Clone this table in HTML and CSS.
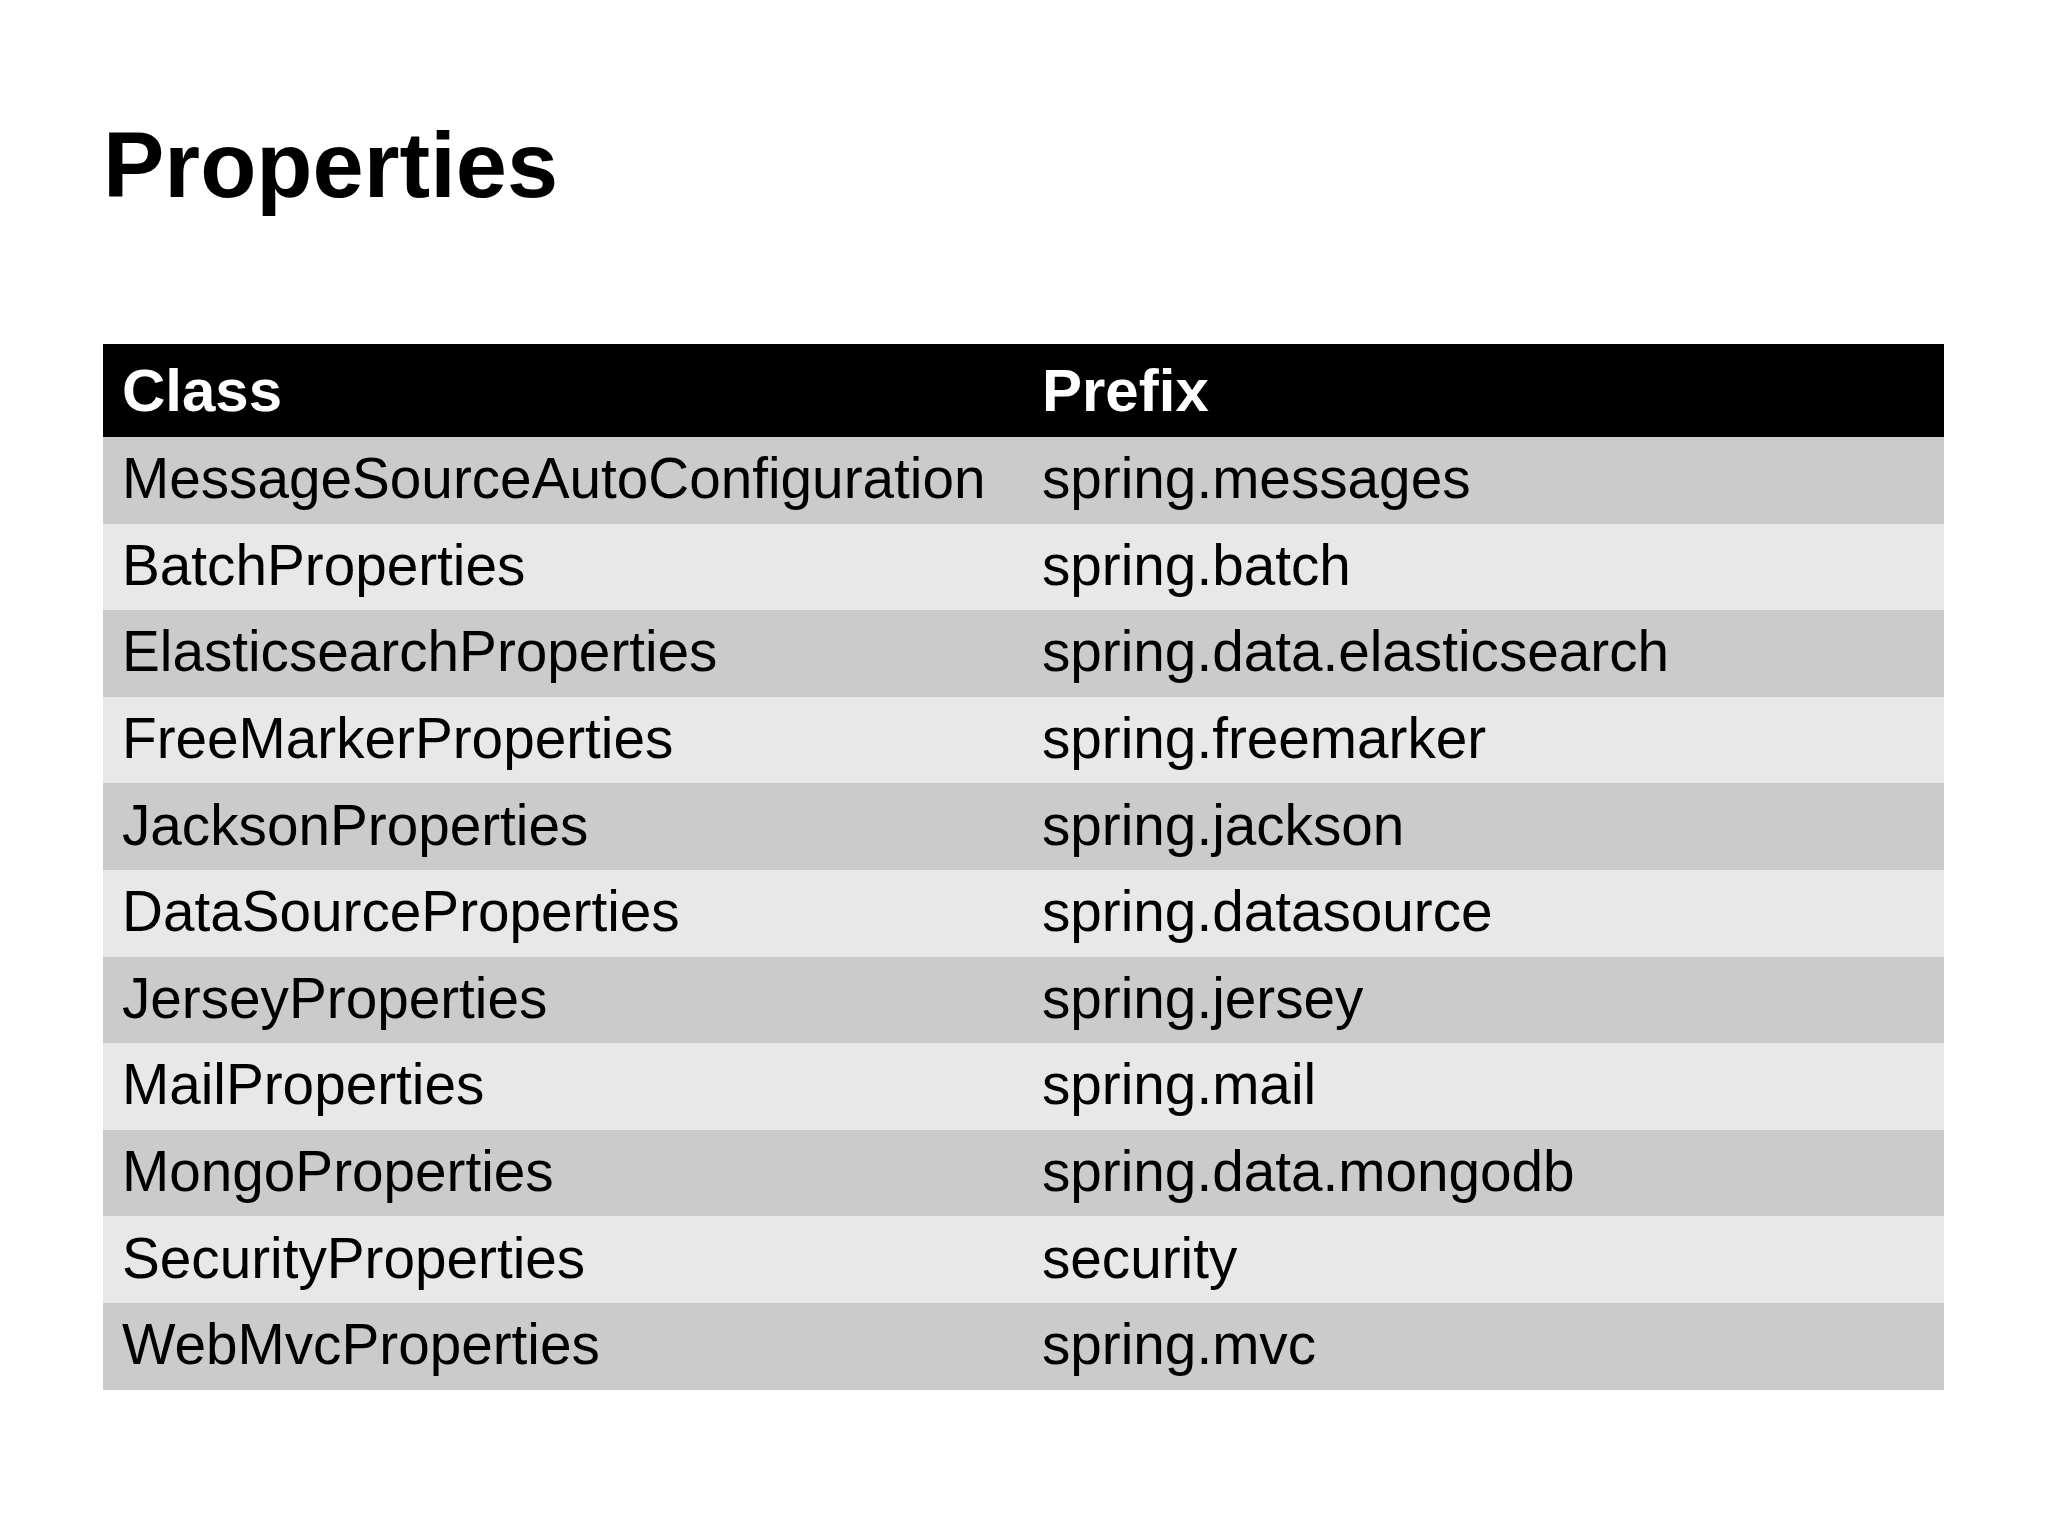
FILE: index.html
```html
<!DOCTYPE html>
<html lang="en">
<head>
<meta charset="utf-8">
<title>Properties</title>
<link rel="stylesheet" href="styles.css">
</head>
<body>
<main class="slide">
  <h1 class="title">Properties</h1>
  <table class="props">
    <thead>
      <tr><th class="col-class">Class</th><th>Prefix</th></tr>
    </thead>
    <tbody>
      <tr><td>MessageSourceAutoConfiguration</td><td>spring.messages</td></tr>
      <tr><td>BatchProperties</td><td>spring.batch</td></tr>
      <tr><td>ElasticsearchProperties</td><td>spring.data.elasticsearch</td></tr>
      <tr><td>FreeMarkerProperties</td><td>spring.freemarker</td></tr>
      <tr><td>JacksonProperties</td><td>spring.jackson</td></tr>
      <tr><td>DataSourceProperties</td><td>spring.datasource</td></tr>
      <tr><td>JerseyProperties</td><td>spring.jersey</td></tr>
      <tr><td>MailProperties</td><td>spring.mail</td></tr>
      <tr><td>MongoProperties</td><td>spring.data.mongodb</td></tr>
      <tr><td>SecurityProperties</td><td>security</td></tr>
      <tr><td>WebMvcProperties</td><td>spring.mvc</td></tr>
    </tbody>
  </table>
</main>
</body>
</html>
```

FILE: styles.css
```css
html, body {
  margin: 0;
  padding: 0;
  background: #ffffff;
}

body {
  font-family: "Liberation Sans", Arial, sans-serif;
  color: #000000;
}

.slide {
  width: 2048px;
  height: 1535px;
  padding: 119px 0 0 103px;
  box-sizing: border-box;
}

.title {
  margin: 0 0 133px 0;
  font-size: 92px;
  font-weight: bold;
  line-height: 1;
  letter-spacing: 0;
}

.props {
  width: 1841px;
  border-collapse: collapse;
  table-layout: fixed;
}

.props th,
.props td {
  padding: 0 0 0 19px;
  text-align: left;
  vertical-align: middle;
  white-space: nowrap;
}

.col-class {
  width: 901px;
}

.props thead tr {
  background: #000000;
  height: 93px;
}

.props th {
  color: #ffffff;
  font-size: 60px;
  font-weight: bold;
  padding-top: 0;
}

.props tbody tr {
  height: 86.6px;
}

.props td {
  font-size: 56.7px;
  padding-bottom: 3px;
}

.props tbody tr:nth-child(odd) {
  background: #cbcbcb;
}

.props tbody tr:nth-child(even) {
  background: #e8e8e8;
}
```
